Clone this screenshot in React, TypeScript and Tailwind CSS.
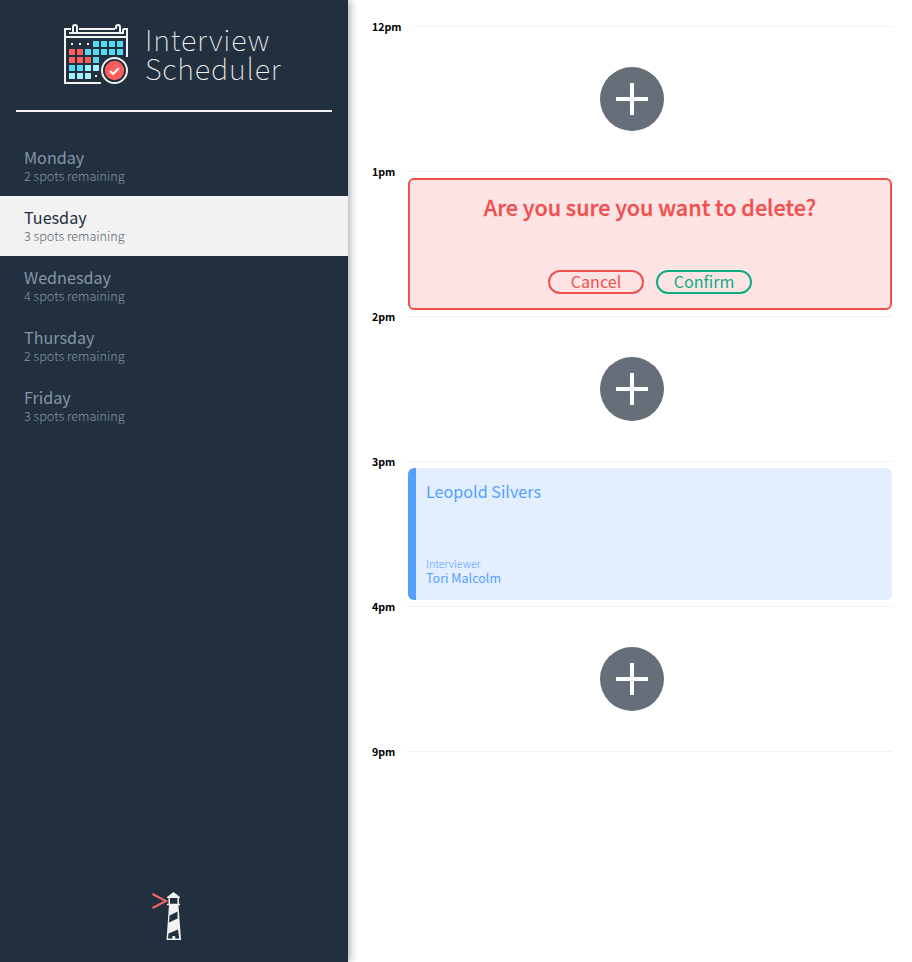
import React from "react";

const days = [
  { name: "Monday", spots: 2 },
  { name: "Tuesday", spots: 3 },
  { name: "Wednesday", spots: 4 },
  { name: "Thursday", spots: 2 },
  { name: "Friday", spots: 3 },
];

const cells: [number, number, string][] = [
  [29, 9, "#55d9f0"], [37, 9, "#55d9f0"], [45, 9, "#55d9f0"], [53, 9, "#55d9f0"],
  [5, 17, "#fd5d5d"], [13, 17, "#fd5d5d"], [21, 17, "#55d9f0"], [29, 17, "#55d9f0"],
  [37, 17, "#55d9f0"], [45, 17, "#55d9f0"], [53, 17, "#55d9f0"],
  [5, 25, "#fd5d5d"], [13, 25, "#fd5d5d"], [21, 25, "#fd5d5d"], [29, 25, "#55d9f0"],
  [5, 33, "#55d9f0"], [13, 33, "#55d9f0"], [21, 33, "#a3effb"], [29, 33, "#a3effb"],
  [5, 41, "#a3effb"], [13, 41, "#a3effb"], [21, 41, "#a3effb"],
];

function CalendarLogo() {
  return (
    <svg width="64" height="60" viewBox="0 0 64 60" fill="none">
      <path d="M7 5H1V59H37M15 5H51M59 5H63V33" stroke="#f2f2f2" strokeWidth="2" />
      <path d="M5 9H59V5M1 13H63" stroke="#f2f2f2" strokeWidth="2" />
      <path d="M9 9V3a2 2 0 0 1 4 0V9M52 5V3a2 2 0 0 1 4 0V9" stroke="#f2f2f2" strokeWidth="2" />
      <g transform="translate(0 8)">
        {cells.map(([x, y, c]) => (
          <rect key={`${x}-${y}`} x={x} y={y} width="6" height="6" fill={c} />
        ))}
      </g>
      <path d="M7 19h2v2H7zM15 19h2v2h-2zM23 19h2v2h-2zM31 51h2v2h-2z" fill="#f2f2f2" />
      <circle cx="50.5" cy="46.5" r="14" fill="#222f3e" />
      <circle cx="50.5" cy="46.5" r="12.5" stroke="#f2f2f2" strokeWidth="2" />
      <circle cx="50.5" cy="46.5" r="9.7" fill="#fd5d5d" />
      <path d="M46 47l3 3 6-6" stroke="#f2f2f2" strokeWidth="2.2" />
    </svg>
  );
}

function Lighthouse() {
  return (
    <svg width="30" height="50" viewBox="0 0 30 50" fill="none">
      <path d="M0.5 3L14 10L0.5 17" stroke="#f76461" strokeWidth="2" />
      <path d="M15 6L21.5 1L28 6V7H15Z" fill="#f2f2f2" />
      <path d="M17.2 6V13M26.2 6V13M15 13.5H28" stroke="#f2f2f2" strokeWidth="1.5" />
      <path d="M17 14H26.5L29 49H14.5Z" fill="#f2f2f2" />
      <path d="M17.6 24.5L25.5 20.5V27.5L17 31.5ZM16.5 42.5L26 38.5L27.2 47.5H23.2V45H20.4V47.5H16Z" fill="#222f3e" />
    </svg>
  );
}

function Slot({ time, wide, children }: { time: string; wide?: boolean; children?: React.ReactNode }) {
  return (
    <article className="h-[145px]">
      <header className="flex h-[13px] items-center">
        <h4 className={`shrink-0 text-[10.6px] font-bold leading-[13px] text-black ${wide ? "w-[41px]" : "w-[35px]"}`}>{time}</h4>
        <hr className="h-px grow border-0 bg-[#f2f2f2]" />
      </header>
      {children}
    </article>
  );
}

function AddButton() {
  return (
    <div className="flex h-[132px] items-center justify-center">
      <button className="flex size-16 items-center justify-center rounded-full bg-[#666e7a]">
        <svg width="32" height="32" viewBox="0 0 32 32">
          <path d="M0 16H32M16 0V32" stroke="#fff" strokeWidth="4" />
        </svg>
      </button>
    </div>
  );
}

export default function App() {
  return (
    <main className="flex h-[962px] w-[912px] overflow-hidden bg-white font-['Noto_Sans_CJK_SC','Noto_Sans_CJK_JP',sans-serif]">
      <aside className="z-10 flex w-[348px] shrink-0 flex-col items-center bg-[#222f3e] shadow-[2px_0_8px_rgba(34,47,62,0.4)]">
        <div className="flex h-[110px] w-[316px] pl-12 pt-6">
          <CalendarLogo />
          <h1 className="ml-[17px] text-[29px] font-[100] leading-[29px] tracking-[0.8px] text-[#f2f2f2]">
            Interview
            <br />
            Scheduler
          </h1>
        </div>
        <hr className="h-[2px] w-[316px] shrink-0 border-0 bg-[#f2f2f2]" />
        <ul className="mt-6 w-full">
          {days.map((d) => {
            const on = d.name === "Tuesday";
            return (
              <li key={d.name} className={`flex h-[60px] flex-col pl-6 pt-[11px] ${on ? "bg-[#f2f2f2]" : ""}`}>
                <h2 className={`text-[16.15px] leading-5 ${on ? "text-[#222f3e]" : "text-[#8395a7]"}`}>{d.name}</h2>
                <h3 className={`mt-px text-[12.6px] font-light leading-4 ${on ? "text-[#576574]" : "text-[#8395a7]"}`}>
                  {d.spots} spots remaining
                </h3>
              </li>
            );
          })}
        </ul>
        <div className="mb-[21px] mr-[14px] mt-auto">
          <Lighthouse />
        </div>
      </aside>
      <section className="w-[544px] pl-6 pt-5">
        <Slot time="12pm" wide>
          <AddButton />
        </Slot>
        <Slot time="1pm">
          <div className="ml-9 flex h-[132px] flex-col items-center justify-between rounded-md border-2 border-[#f05050] bg-[#fde4e4] pb-[14px] pt-[11px]">
            <h1 className="text-[21.55px] font-medium leading-8 text-[#f05050] [-webkit-text-stroke:0.3px_#f05050]">Are you sure you want to delete?</h1>
            <div className="flex gap-3">
              <button className="h-6 w-24 rounded-full border-2 border-[#f05050] text-[16.1px] leading-[18px] text-[#f05050]">
                <span className="block h-5">Cancel</span>
              </button>
              <button className="h-6 w-24 rounded-full border-2 border-[#10ac84] text-[16.1px] leading-[18px] text-[#10ac84]">
                <span className="block h-5">Confirm</span>
              </button>
            </div>
          </div>
        </Slot>
        <Slot time="2pm">
          <AddButton />
        </Slot>
        <Slot time="3pm">
          <div className="ml-9 flex h-[132px] flex-col rounded-md border-l-8 border-[#54a0ff] bg-[#e3efff] pl-[10px] pt-[11px] text-[#54a0ff]">
            <h2 className="text-[16.15px] leading-6">Leopold Silvers</h2>
            <h4 className="mt-[54px] text-[10.7px] font-light leading-[14px]">Interviewer</h4>
            <h3 className="text-[12.55px] leading-[14px]">Tori Malcolm</h3>
          </div>
        </Slot>
        <Slot time="4pm">
          <AddButton />
        </Slot>
        <Slot time="9pm" />
      </section>
    </main>
  );
}
